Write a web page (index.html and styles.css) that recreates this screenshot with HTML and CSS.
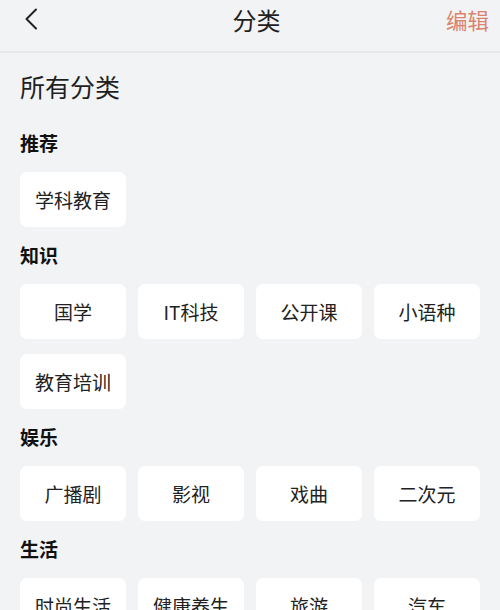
FILE: index.html
```html
<!DOCTYPE html>
<html lang="zh">
<head>
<meta charset="utf-8">
<link rel="stylesheet" href="styles.css">
</head>
<body>
<header class="nav">
  <span class="back"><svg width="14" height="22" viewBox="0 0 14 22"><path d="M12 1.5 L2.5 11 L12 20.5" fill="none" stroke="#222" stroke-width="2" stroke-linecap="round" stroke-linejoin="round"/></svg></span>
  <span class="title">分类</span>
  <span class="edit">编辑</span>
</header>
<main class="content">
  <h1 class="all">所有分类</h1>
  <section class="group first">
    <h2 class="label">推荐</h2>
    <div class="grid"><div class="card">学科教育</div></div>
  </section>
  <section class="group">
    <h2 class="label">知识</h2>
    <div class="grid">
      <div class="card">国学</div><div class="card">IT科技</div><div class="card">公开课</div><div class="card">小语种</div>
      <div class="card">教育培训</div>
    </div>
  </section>
  <section class="group">
    <h2 class="label">娱乐</h2>
    <div class="grid">
      <div class="card">广播剧</div><div class="card">影视</div><div class="card">戏曲</div><div class="card">二次元</div>
    </div>
  </section>
  <section class="group">
    <h2 class="label">生活</h2>
    <div class="grid">
      <div class="card">时尚生活</div><div class="card">健康养生</div><div class="card">旅游</div><div class="card">汽车</div>
    </div>
  </section>
</main>
</body>
</html>
```
FILE: styles.css
```css
* { box-sizing: border-box; }
html, body { margin: 0; padding: 0; }
body {
  background: #f2f3f5;
  font-family: "Noto Sans CJK SC", "Noto Sans", sans-serif;
  color: #222;
  width: 500px;
  overflow: hidden;
}
.nav {
  height: 53px;
  border-bottom: 2px solid #e6e7ea;
  display: grid;
  grid-template-columns: 1fr auto 1fr;
  align-items: center;
  padding: 0 11px 12px 24px;
}
.back { display: flex; align-items: center; margin-top: -2px; }
.back svg { display: block; }
.title { font-size: 24px; color: #1f1f1f; line-height: 1; }
.edit { justify-self: end; font-size: 21.5px; color: #d9846d; line-height: 1; }
.content { padding: 0 20px; }
.all {
  margin: 0;
  padding-top: 17px;
  font-size: 25px;
  font-weight: 400;
  line-height: 32px;
  color: #1f1f1f;
}
.label {
  margin: 0;
  padding-top: 18px;
  font-size: 19px;
  font-weight: 700;
  line-height: 20px;
  margin-bottom: 19px;
  color: #111;
}
.first .label { padding-top: 31px; }
.grid {
  display: grid;
  grid-template-columns: repeat(4, 106px);
  column-gap: 12px;
  row-gap: 15px;
}
.card {
  height: 55px;
  background: #fff;
  border-radius: 7px;
  display: flex;
  align-items: center;
  justify-content: center;
  font-size: 19px;
  color: #222;
}
```
